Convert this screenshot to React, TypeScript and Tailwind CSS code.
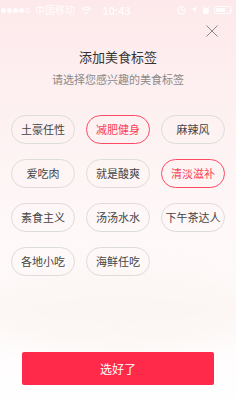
import React from "react";

const tags = [
  { t: "土豪任性", s: false },
  { t: "减肥健身", s: true },
  { t: "麻辣风", s: false },
  { t: "爱吃肉", s: false },
  { t: "就是酸爽", s: false },
  { t: "清淡滋补", s: true },
  { t: "素食主义", s: false },
  { t: "汤汤水水", s: false },
  { t: "下午茶达人", s: false },
  { t: "各地小吃", s: false },
  { t: "海鲜任吃", s: false },
];

export default function App() {
  return (
    <div
      className="relative w-[236px] h-[419px] overflow-hidden bg-gradient-to-b from-[#fde9eb] via-[#fef7f7] to-[#ffffff]"
      style={{ fontFamily: '"Noto Sans CJK SC", "Noto Sans", sans-serif' }}
    >
      <div className="absolute left-[-20px] right-[-20px] top-[270px] h-[80px] rounded-[50%] bg-[#fbf5f2] blur-[12px] opacity-80" />
      <div className="relative flex flex-col">
        {/* status bar */}
        <div className="h-[20px] flex items-center px-[1px] text-white text-[10px] leading-none opacity-90 whitespace-nowrap">
          <div className="flex-1 flex items-center">
            <div className="flex gap-[1px]">
              {[0, 1, 2, 3].map((i) => (
                <span key={i} className="w-[5px] h-[5px] rounded-full bg-white" />
              ))}
              <span className="w-[5px] h-[5px] rounded-full border border-white" />
            </div>
            <span className="ml-[5px]">中国移动</span>
            <svg width="11" height="9" viewBox="0 0 12 9" className="ml-[6px] shrink-0">
              <path d="M1 3.2a7 7 0 0 1 10 0M2.8 5a4.5 4.5 0 0 1 6.4 0" stroke="white" strokeWidth="1.3" fill="none" />
              <circle cx="6" cy="7.3" r="1.2" fill="white" />
            </svg>
          </div>
          <span className="text-[11px] font-medium">10:43</span>
          <div className="flex-1 flex items-center justify-end gap-[4px] pr-[3px]">
            <svg width="9" height="9" viewBox="0 0 10 10">
              <circle cx="5" cy="5" r="4" stroke="white" strokeWidth="1.2" fill="none" />
              <path d="M5 2.5V5h2.3" stroke="white" strokeWidth="1.2" fill="none" />
            </svg>
            <svg width="8" height="8" viewBox="0 0 10 10">
              <path d="M9 1L1 4.5l4 .5.5 4z" fill="white" />
            </svg>
            <svg width="8" height="9" viewBox="0 0 10 11">
              <circle cx="5" cy="6" r="4" fill="white" />
              <path d="M1 2l2-1.5M9 2L7 .5" stroke="white" strokeWidth="1.2" />
            </svg>
            <div className="flex items-center">
              <div className="w-[17px] h-[8px] border border-white rounded-[1.5px] p-[1px]">
                <div className="w-[9px] h-full bg-white" />
              </div>
              <div className="w-[1.5px] h-[3px] bg-white" />
            </div>
          </div>
        </div>

        {/* close */}
        <div className="h-[22px] flex items-center justify-end pr-[18px]">
          <svg width="12" height="12" viewBox="0 0 12 12">
            <path d="M0.5 0.5L11.5 11.5M11.5 0.5L0.5 11.5" stroke="#8a8a8a" strokeWidth="1" />
          </svg>
        </div>

        <div className="mt-[5px] text-center text-[13px] leading-[20px] text-[#333333]">添加美食标签</div>
        <div className="mt-[4px] text-center text-[11px] leading-[16px] text-[#8a8a8a]">请选择您感兴趣的美食标签</div>

        <div className="mt-[28px] px-[11px] grid grid-cols-3 gap-x-[11px] gap-y-[15px]">
          {tags.map((tag) => (
            <div
              key={tag.t}
              className={
                tag.s
                  ? "h-[29px] rounded-full border border-[#fb4a63] text-[#f8405a] flex items-center justify-center text-[11px] leading-none"
                  : "h-[29px] rounded-full border border-[#dcdcdc] text-[#444444] flex items-center justify-center text-[11px] leading-none"
              }
            >
              {tag.t}
            </div>
          ))}
        </div>

        <div className="mt-[76px] px-[22px]">
          <div className="h-[33px] rounded-[2px] bg-[#ff2a4a] flex items-center justify-center text-white text-[12px]">
            选好了
          </div>
        </div>
      </div>
    </div>
  );
}
